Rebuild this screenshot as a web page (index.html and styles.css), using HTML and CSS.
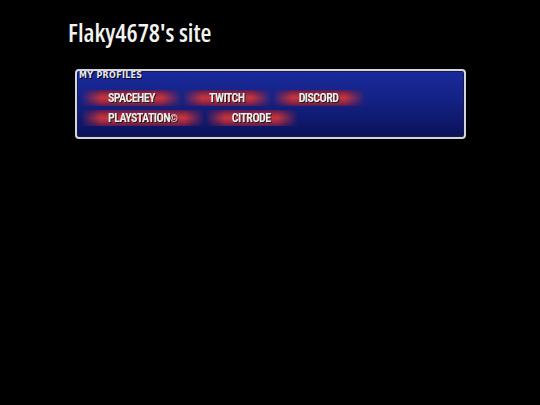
FILE: index.html
```html
<!DOCTYPE html>
<html>
<head>
<meta charset="utf-8">
<link rel="stylesheet" href="styles.css">
</head>
<body>
<div class="page">
  <h1 class="title">Flaky4678's site</h1>
  <section class="panel">
    <h2 class="panel-title">MY PROFILES</h2>
    <div class="links">
      <div class="row">
        <a class="btn" href="#"><span class="label">SPACEHEY</span></a>
        <a class="btn" href="#"><span class="label">TWITCH</span></a>
        <a class="btn" href="#"><span class="label">DISCORD</span></a>
      </div>
      <div class="row">
        <a class="btn" href="#"><span class="label">PLAYSTATION<span class="mark">©</span></span></a>
        <a class="btn" href="#"><span class="label">CITRODE</span></a>
      </div>
    </div>
  </section>
</div>
</body>
</html>
```
FILE: styles.css
```css
html, body {
  margin: 0;
  background: #000;
}
.page {
  padding: 15px 0 0 68px;
}
.title {
  margin: 0;
  font-family: "Open Sans", "DejaVu Sans", sans-serif;
  font-stretch: 75%;
  font-weight: 600;
  font-size: 25px;
  line-height: 34px;
  color: #f2f2f2;
}
.panel {
  margin: 20px 0 0 7px;
  width: 387px;
  height: 66px;
  border: 2px solid #d4d4dc;
  border-radius: 4px;
  background: linear-gradient(180deg, #1a2a9c 0%, #142184 45%, #0b1258 100%);
  box-shadow: inset 0 0 0 1px #1a1a4a;
}
.panel-title {
  margin: 0;
  padding: 0 0 0 2px;
  font-family: "DejaVu Sans", Verdana, sans-serif;
  font-weight: bold;
  font-size: 8px;
  line-height: 10px;
  color: #e6e6ee;
  text-shadow: 1px 1px 0 #000;
  letter-spacing: 0.3px;
}
.links {
  display: flex;
  flex-direction: column;
  gap: 4px;
  padding: 9px 0 0 4px;
}
.row {
  display: flex;
  gap: 0;
}
.btn {
  display: block;
  height: 16px;
  padding: 0 27px;
  background: linear-gradient(180deg, #5a1a50 0%, #9a2a44 25%, #c8343c 50%, #9a2a44 75%, #5a1a50 100%);
  -webkit-mask-image: linear-gradient(90deg, transparent 0, #000 20px, #000 calc(100% - 20px), transparent 100%);
  mask-image: linear-gradient(90deg, transparent 0, #000 20px, #000 calc(100% - 20px), transparent 100%);
  text-decoration: none;
}
.label {
  display: block;
  font-family: "Roboto Condensed", "Liberation Sans", sans-serif;
  font-weight: bold;
  font-size: 12px;
  letter-spacing: -0.6px;
  line-height: 17px;
  color: #ececec;
  text-shadow: 1px 1px 0 #1a1a1a;
}
.mark {
  font-size: 10px;
  letter-spacing: 0;
}
```
